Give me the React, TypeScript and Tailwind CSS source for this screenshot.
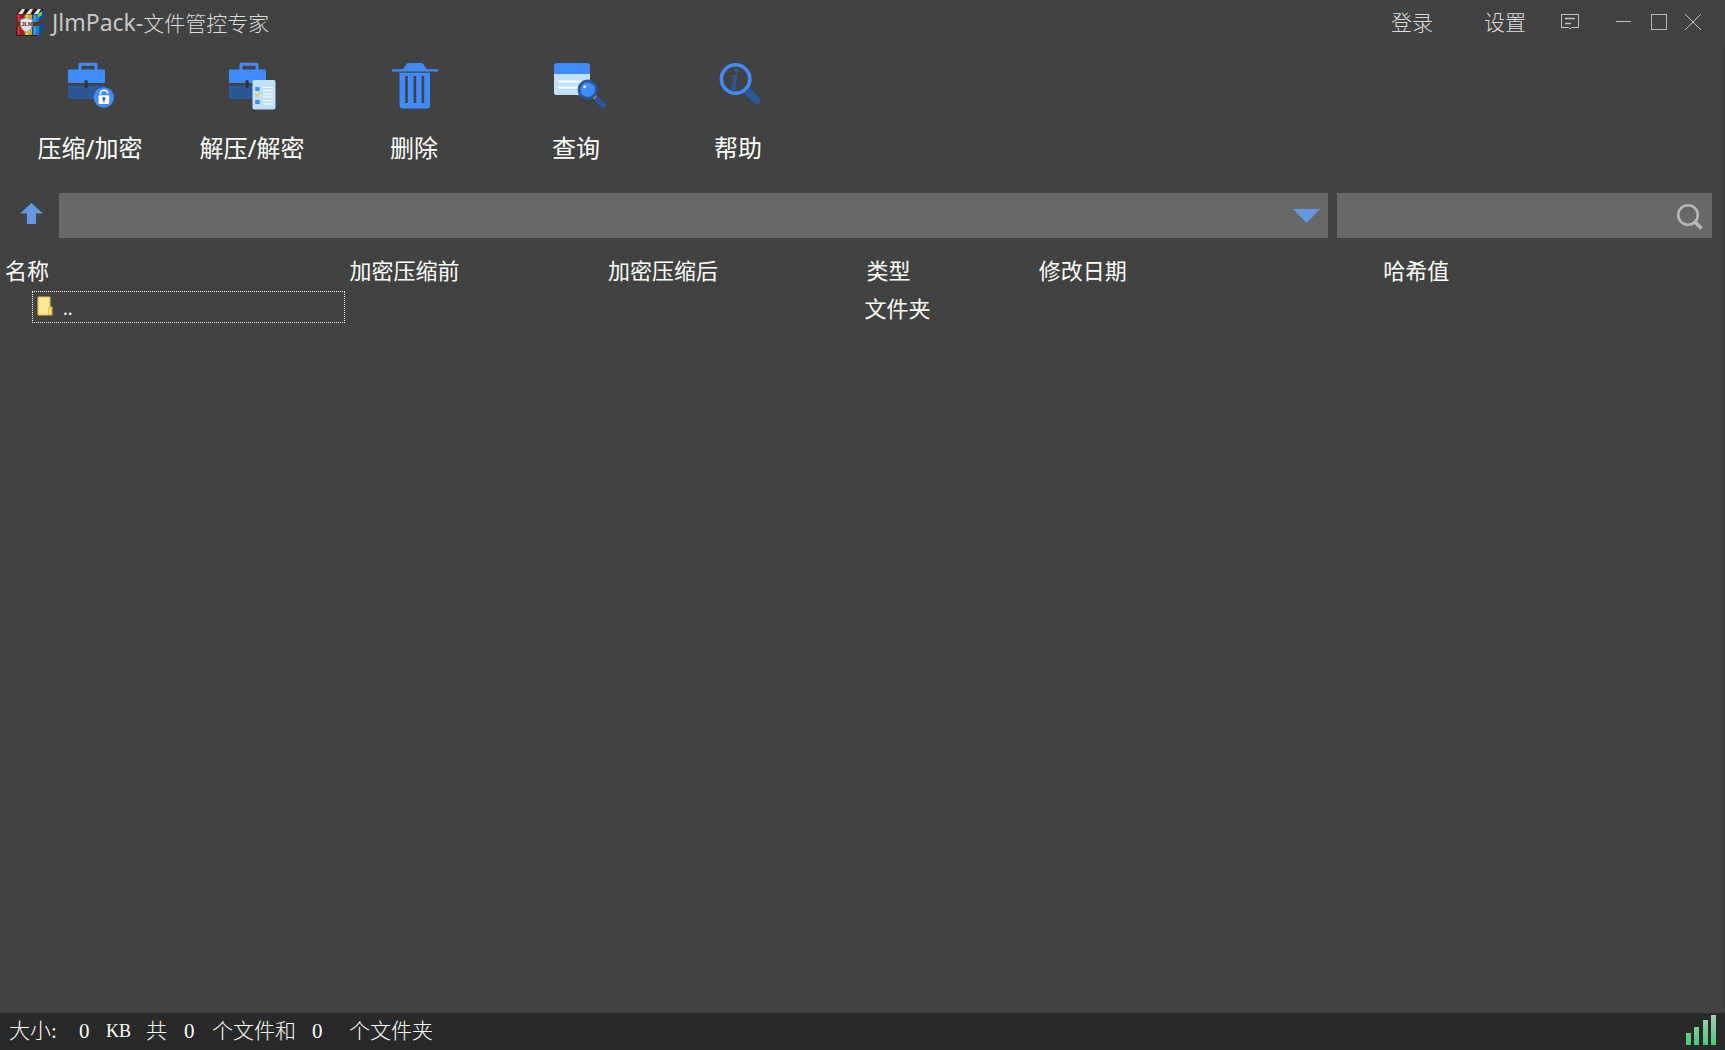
import React from 'react';

const BriefcaseShape: React.FC = () => (
  <>
    <path d="M14 9.5V3.3h16V9.5" fill="none" stroke="#408cff" strokeWidth="3" strokeLinejoin="round" />
    <rect x="2" y="8.5" width="37" height="13.5" rx="1" fill="#408cff" />
    <rect x="2" y="24.5" width="37" height="13.5" rx="1" fill="#2b5797" />
    <rect x="18.5" y="19" width="3.2" height="8" rx="1.6" fill="#333333" />
  </>
);

const CompressIcon: React.FC = () => (
  <svg width="50" height="50" viewBox="0 0 50 50" className="overflow-visible" aria-hidden="true">
    <g transform="translate(1 0)">
      <BriefcaseShape />
    </g>
    <circle cx="38.8" cy="36.5" r="10.2" fill="#408cff" />
    <path d="M35.3 33.2a3.7 3.7 0 0 1 7.4-.6" fill="none" stroke="#ffffff" strokeWidth="1.6" />
    <rect x="33.6" y="34.3" width="10.6" height="8.6" rx="1" fill="#ffffff" />
    <circle cx="38.9" cy="37.4" r="1.5" fill="#2b5797" />
    <path d="M38.9 37v4" stroke="#2b5797" strokeWidth="1.3" />
  </svg>
);

const ExtractIcon: React.FC = () => (
  <svg width="50" height="50" viewBox="0 0 50 50" className="overflow-visible" aria-hidden="true">
    <BriefcaseShape />
    <rect x="25.5" y="19" width="23" height="29.5" rx="1.8" fill="#bfe1fb" />
    <path d="M36.2 26.5h9.6M36.2 29.5h9.6M36.2 33h9.6M36.2 36h9.6M36.2 39.5h9.6M36.2 43h9.6" stroke="#ffffff" strokeWidth="1.2" />
    <rect x="28.2" y="26" width="4.4" height="4" fill="#408cff" />
    <rect x="28.2" y="39" width="4.4" height="4" fill="#408cff" />
    <path d="M28.3 32.8l2 2.4 3.6-4.6" fill="none" stroke="#ffc34d" strokeWidth="1.5" />
  </svg>
);

const TrashIcon: React.FC = () => (
  <svg width="50" height="50" viewBox="0 0 50 50" className="overflow-visible" aria-hidden="true">
    <path d="M3 8.2h11l3.4-5Q18.2 2 19.8 2H32q1.6 0 2.4 1.2l3.4 5H49v2.4H3z" fill="#408cff" />
    <path
      fillRule="evenodd"
      d="M10.5 11.8h30.5V44q0 3.5-3.5 3.5H14q-3.5 0-3.500-3.5zM16.200 15v27h2.600V15zM24.600 15v27h2.600V15zM32.600 15v27h2.600V15z"
      fill="#408cff"
    />
  </svg>
);

const QueryIcon: React.FC = () => (
  <svg width="50" height="50" viewBox="0 0 50 50" className="overflow-visible" aria-hidden="true">
    <path d="M3 13h36v18.5q0 2.5-2.5 2.5h-31Q3 34 3 31.5z" fill="#bfe1fb" />
    <path d="M3 13V5q0-3 3-3h30q3 0 3 3v8z" fill="#408cff" />
    <path d="M8 20.5h22M8 26.5h18" stroke="#ffffff" strokeWidth="2" strokeLinecap="round" />
    <path d="M43 35.5l2 2" stroke="#b09a5a" strokeWidth="4" />
    <path d="M44.5 36.8L54 46" stroke="#2b5797" strokeWidth="5.5" />
    <circle cx="36.7" cy="28.7" r="8.7" fill="#408cff" stroke="#2b5797" strokeWidth="2.8" />
    <circle cx="33.6" cy="25.8" r="1.4" fill="#ffffff" />
  </svg>
);

const HelpIcon: React.FC = () => (
  <svg width="50" height="50" viewBox="0 0 50 50" className="overflow-visible" aria-hidden="true">
    <circle cx="22.6" cy="18" r="14.2" fill="none" stroke="#408cff" strokeWidth="3.6" />
    <text x="17.5" y="28.5" fontFamily="Liberation Serif, serif" fontStyle="italic" fontWeight="700" fontSize="31" fill="#2b5797">
      i
    </text>
    <path d="M33.8 29.5l4 4" stroke="#2b5797" strokeWidth="7.5" />
    <path d="M36.8 32.5l7 7" stroke="#2b5797" strokeWidth="7.5" strokeLinecap="round" />
  </svg>
);

const AppLogo: React.FC = () => (
  <svg width="28" height="28" viewBox="0 0 28 28" aria-hidden="true">
    <path d="M0 7L4 1h22l2 1v20l-8 6H0z" fill="#2a1c16" />
    <path d="M2 6l4-5h3L6.500 6zM10 6l4-5h3l-2.500 5zM18 6l4-5h3l-3 5z" fill="#e8e8e8" />
    <path d="M0 6.500h8V27H1z" fill="#a81c28" />
    <path d="M2 6.500h1.500V27H2z" fill="#d04040" />
    <path d="M8.500 6.500H16V27H8.500z" fill="#d9a520" />
    <path d="M10 6.500h2V27h-2z" fill="#f0d45a" />
    <path d="M16.500 6.500H23V27h-6.500z" fill="#1a7fd0" />
    <path d="M23 6.500l5-5V22l-5 5z" fill="#0e4f94" />
    <path d="M18 6.500h1.500V27H18z" fill="#45a5e0" />
    <path d="M22 6l4-3v4l-4 3z" fill="#7fc24a" />
    <path d="M0 14h21l7-3v4l-7 3H0z" fill="#5b3420" />
    <path d="M4.500 11.500q3-.5 6-2 3 1.500 6 2v6q-.8 4.500-6 7-5.200-2.500-6-7z" fill="#e3dfd9" stroke="#9a8f86" />
    <text x="5.500" y="17.500" fontFamily="Liberation Sans, sans-serif" fontWeight="700" fontSize="5.500" fill="#333333">JLM</text>
  </svg>
);

const tools = [
  { label: '压缩/加密', Icon: CompressIcon },
  { label: '解压/解密', Icon: ExtractIcon },
  { label: '删除', Icon: TrashIcon },
  { label: '查询', Icon: QueryIcon },
  { label: '帮助', Icon: HelpIcon },
];

const columns = [
  { title: '名称', width: 'w-[20%]' },
  { title: '加密压缩前', width: 'w-[15%]' },
  { title: '加密压缩后', width: 'w-[15%]' },
  { title: '类型', width: 'w-[10%]' },
  { title: '修改日期', width: 'w-[20%]' },
  { title: '哈希值', width: 'w-[20%]' },
];

const TitleBar: React.FC = () => (
  <header className="flex h-11 items-center justify-between pl-4 pr-6 text-[21px] font-light text-[#dcdcdc]">
    <div className="flex items-center gap-2">
      <AppLogo />
      <h1 className="pt-0.5">
        <span className="text-[23px] font-normal leading-8 text-[#c8c8c8]">JlmPack-</span>
        文件管控专家
      </h1>
    </div>
    <div className="flex items-center">
      <button type="button" className="mr-[51px] pt-0.5">登录</button>
      <button type="button" className="mr-[35px] pt-0.5">设置</button>
      <button type="button" aria-label="消息" className="mr-[37px]">
        <svg width="18" height="16" viewBox="0 0 18 16" fill="none" stroke="#c4c4c4">
          <path d="M.5.5h17v13H10.500l-1.500 1.500-1.500-1.500H.5z" />
          <path d="M4 4.500h10M4 9.500h6" strokeWidth="1.300" />
        </svg>
      </button>
      <button type="button" aria-label="最小化" className="mr-5">
        <svg width="15" height="16" viewBox="0 0 15 16" stroke="#c4c4c4">
          <path d="M0 7.500h15" />
        </svg>
      </button>
      <button type="button" aria-label="最大化" className="mr-[18px]">
        <svg width="16" height="16" viewBox="0 0 16 16" fill="none" stroke="#b8b8b8">
          <rect x=".5" y=".5" width="15" height="15" />
        </svg>
      </button>
      <button type="button" aria-label="关闭">
        <svg width="16" height="16" viewBox="0 0 16 16" stroke="#c4c4c4">
          <path d="M0 0l16 16M16 0L0 16" />
        </svg>
      </button>
    </div>
  </header>
);

const Toolbar: React.FC = () => (
  <nav className="flex h-[149px] pl-[9px] pt-[17px]">
    {tools.map(({ label, Icon }) => (
      <button key={label} type="button" className="flex w-[162px] flex-col items-center">
        <Icon />
        <span className="mt-[19px] text-2xl leading-9">{label}</span>
      </button>
    ))}
  </nav>
);

const AddressBar: React.FC = () => (
  <div className="flex h-[45px] pr-[11px]">
    <button type="button" aria-label="上一级" className="flex w-[59px] shrink-0 items-center pl-5">
      <svg width="23" height="21" viewBox="0 0 23 21" className="mb-1">
        <path d="M11.500 0L23 10.500H16V21H7V10.500H0z" fill="#6498e0" />
      </svg>
    </button>
    <div className="mr-[9px] flex grow items-center bg-[#686868]">
      <input type="text" aria-label="路径" className="h-full min-w-0 grow bg-transparent px-2 text-[22px] outline-none" />
      <button type="button" aria-label="展开路径" className="px-2">
        <svg width="27" height="14" viewBox="0 0 27 14">
          <path d="M0 0h27L13.500 14z" fill="#6498e0" />
        </svg>
      </button>
    </div>
    <div className="flex w-[375px] shrink-0 items-center bg-[#686868]">
      <input type="text" aria-label="搜索" className="h-full min-w-0 grow bg-transparent px-2 text-[22px] outline-none" />
      <button type="button" aria-label="开始搜索" className="pl-2 pr-[9px] pt-0.5">
        <svg width="27" height="27" viewBox="0 0 27 27" fill="none" stroke="#b8b8b8">
          <circle cx="12" cy="12" r="9.800" strokeWidth="2.600" />
          <path d="M18.500 18.500l7 7" strokeWidth="3.600" />
        </svg>
      </button>
    </div>
  </div>
);

const FileTable: React.FC = () => (
  <table className="mt-[11px] w-full table-fixed border-collapse text-left text-[22px]">
    <thead>
      <tr className="h-[41px]">
        {columns.map((col) => (
          <th key={col.title} scope="col" className={`${col.width} py-0 pl-[5px] font-normal leading-8`}>
            {col.title}
          </th>
        ))}
      </tr>
    </thead>
    <tbody>
      <tr className="h-[34px]">
        <td className="py-0 pl-8">
          <div className="flex h-8 items-center border border-dotted border-white pl-1">
            <svg width="16" height="20" viewBox="0 0 16 20" className="mb-0.5" aria-hidden="true">
              <path d="M1 1h12v10h2v8H1z" fill="#ffe699" stroke="#e5bd3c" />
              <path d="M11.500 18.500v-7h3v7z" fill="#ffdf80" stroke="#e5bd3c" />
            </svg>
            <span className="pl-2.5 pt-0.5 text-lg leading-7">..</span>
          </div>
        </td>
        <td />
        <td />
        <td className="py-0 pl-[3px] pt-0.5 leading-8">文件夹</td>
        <td />
        <td />
      </tr>
    </tbody>
  </table>
);

const StatusBar: React.FC = () => (
  <footer className="flex h-[37px] items-center justify-between bg-[#292929] px-[9px]">
    <p className="flex items-center pb-0.5 font-['Liberation_Serif','Noto_Sans_CJK_SC',serif] text-[21px] font-light leading-8">
      <span className="w-[70px]">大小:</span>
      <span className="w-[27px]">0</span>
      <span className="w-10 text-lg leading-8">KB</span>
      <span className="w-[38px]">共</span>
      <span className="w-7">0</span>
      <span className="w-[100px]">个文件和</span>
      <span className="w-[37px]">0</span>
      <span>个文件夹</span>
    </p>
    <svg width="30" height="30" viewBox="0 0 30 30" className="mb-1" role="img" aria-label="信号">
      <defs>
        <linearGradient id="signal" x1="0" y1="0" x2="0" y2="30" gradientUnits="userSpaceOnUse">
          <stop offset="0" stopColor="#a9ccb8" />
          <stop offset="1" stopColor="#4cc878" />
        </linearGradient>
      </defs>
      <path d="M0 18h5v12H0zM8 12h5v18H8zM17 5h5v25h-5zM25 0h5v30h-5z" fill="url(#signal)" />
    </svg>
  </footer>
);

const App: React.FC = () => {
  return (
    <div className="flex min-h-screen flex-col bg-[#424242] font-['Noto_Sans','Noto_Sans_CJK_SC',sans-serif] text-white">
      <TitleBar />
      <div className="flex grow flex-col border-r-2 border-[#3c3c3c]">
        <Toolbar />
        <AddressBar />
        <main className="grow">
          <FileTable />
        </main>
      </div>
      <StatusBar />
    </div>
  );
};

export default App;
